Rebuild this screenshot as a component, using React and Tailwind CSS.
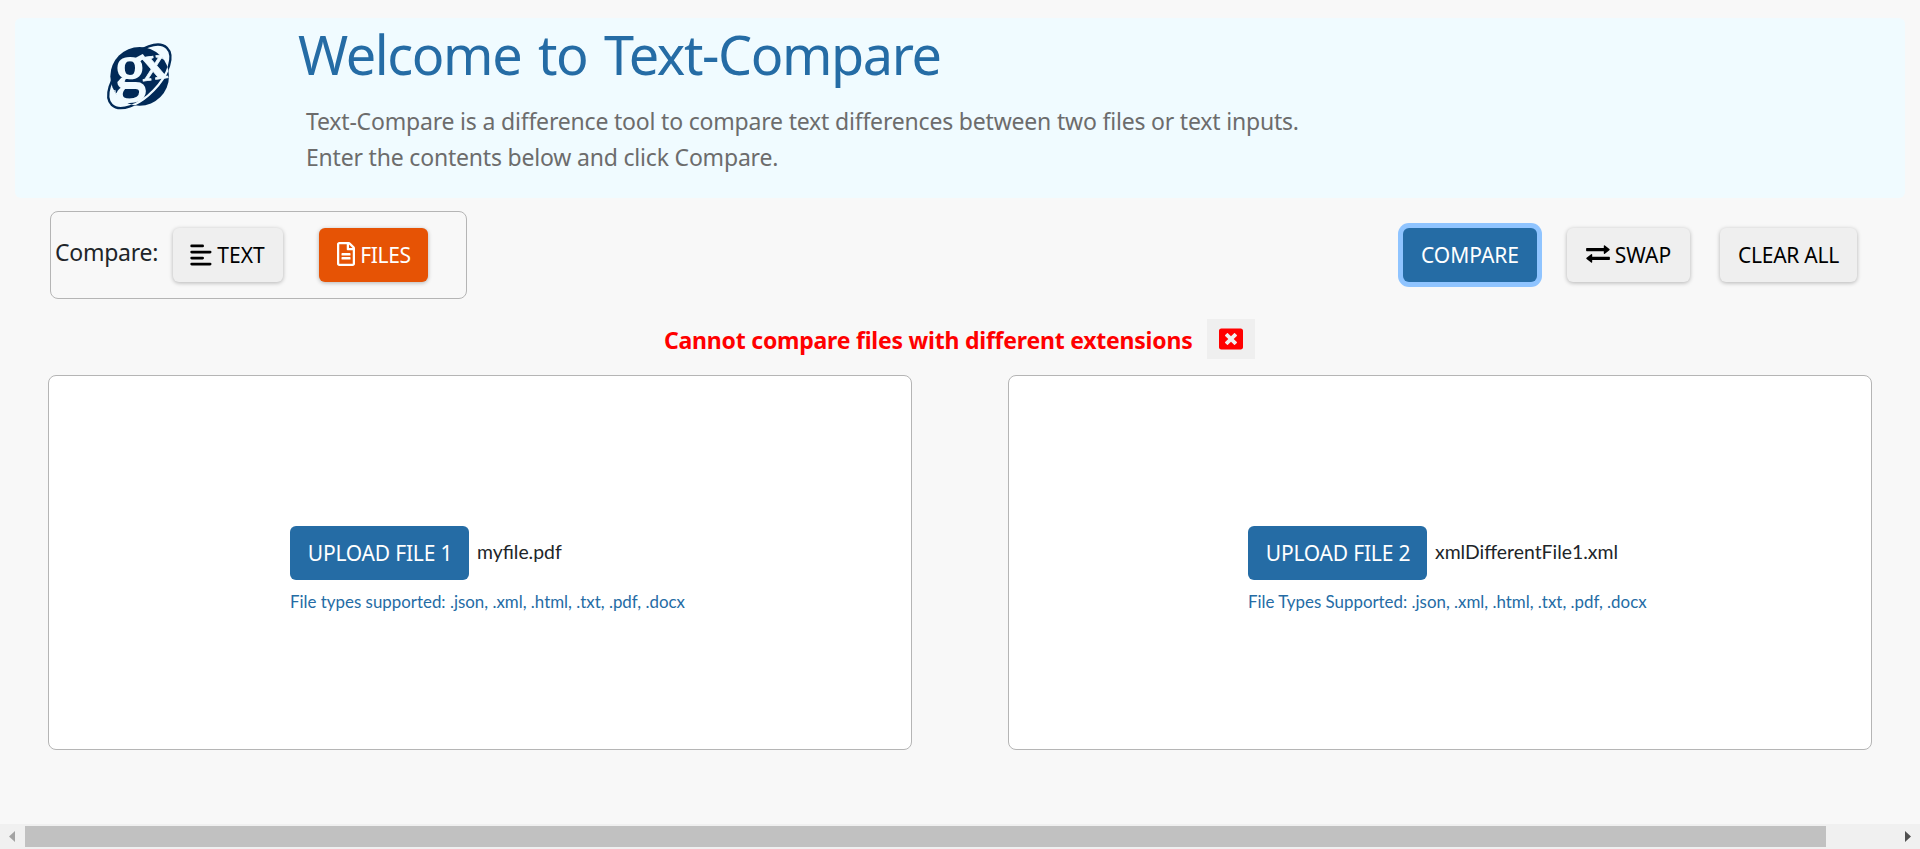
import { FaRegFileAlt, FaWindowClose } from "react-icons/fa";

function Logo() {
  return (
    <svg viewBox="0 0 200 204" className="h-[68px] w-[66.67px] overflow-visible" aria-label="gx">
      <defs>
        <clipPath id="globe">
          <circle cx="101" cy="100" r="88" />
        </clipPath>
      </defs>
      <ellipse cx="100" cy="100" rx="119" ry="60" transform="rotate(-46 100 100)" fill="none" stroke="#012a57" strokeWidth="7" />
      <circle cx="101" cy="100" r="88" fill="#012a57" />
      <g clipPath="url(#globe)">
        <path d="M-19 100 A119 60 0 0 0 219 100" transform="rotate(-46 100 100)" fill="none" stroke="#f0fbff" strokeWidth="7" />
        <path d="M10 148 L28 140 L30 150 L42 148 L36 168 L42 188 L12 190 Z" fill="#f0fbff" />
        <path d="M140 6 L166 28 L162 44 L174 50 L204 40 L190 0 Z" fill="#f0fbff" />
      </g>
      <g fill="#f0fbff" stroke="#f0fbff" fontFamily="'Liberation Serif', serif">
        <text x="26" y="134" fontSize="188" fontWeight="400" strokeWidth="6">g</text>
        <text x="106" y="110" fontSize="154" fontWeight="700" strokeWidth="2" transform="rotate(-8 140 76)">x</text>
      </g>
    </svg>
  );
}

function AlignIcon() {
  return (
    <svg viewBox="0 0 22 22" className="h-[22px] w-[22px] shrink-0" stroke="currentColor" strokeWidth="2.8" strokeLinecap="round">
      <path d="M1.7 1.9H12.6M1.7 8.1H20.1M1.7 14.1H12.6M1.7 20.1H20.1" />
    </svg>
  );
}

function SwapIcon() {
  return (
    <svg viewBox="0 0 24 18" className="h-[18px] w-6 shrink-0" fill="currentColor">
      <path d="M.8 3H17.8V.9Q17.8-.3 18.9.4L23.4 4Q24 4.6 23.4 5.2L18.9 8.8Q17.8 9.4 17.8 8.3V6.2H.8Q.1 6.2.1 5.5V3.7Q.1 3 .8 3Z" />
      <path d="M23.2 11.8H6.2V9.7Q6.2 8.5 5.1 9.2L.6 12.8Q0 13.4.6 14L5.1 17.6Q6.2 18.2 6.2 17.1V15H23.2Q23.9 15 23.9 14.3V12.5Q23.9 11.8 23.2 11.8Z" />
    </svg>
  );
}

const buttonBase =
  "flex h-[54px] items-center justify-center rounded-md pt-px font-['Noto_Sans',sans-serif] text-[21px] leading-none whitespace-nowrap";
const lightButton = "bg-[#efefef] text-black shadow-[0_1px_4px_rgba(0,0,0,0.28)]";

function UploadCard({ label, file, caption, offset }) {
  return (
    <section className={`h-[375px] w-[864px] rounded-lg border border-[#b5b5b5] bg-white pt-[150px] ${offset}`}>
      <div className="flex items-center">
        <button className={`${buttonBase} w-[179px] bg-[#256ca5] pl-px tracking-[-0.2px] text-white`}>{label}</button>
        <span className="-mt-0.5 ml-2 font-['Lato',sans-serif] text-[19.4px] text-[#212529]">{file}</span>
      </div>
      <p className="mt-2.5 font-['Lato',sans-serif] text-[16.9px] leading-6 text-[#256ca5]">{caption}</p>
    </section>
  );
}

export default function App() {
  return (
    <div className="flex h-[849px] w-[1920px] flex-col overflow-hidden bg-[#f8f8f8] font-['Noto_Sans',sans-serif]">
      <header className="mx-[15px] mt-[18px] flex h-[180px] shrink-0 rounded-md bg-[#f0fbff]">
        <div className="w-[283px] pt-[25px] pl-[91px]">
          <Logo />
        </div>
        <div>
          <h1 className="h-[76px] text-[54px] leading-[72px] tracking-[-1.4px] text-[#256ca5] [word-spacing:4px]">Welcome to Text-Compare</h1>
          <p className="mt-[9px] pl-2 text-[23px] leading-9 tracking-[-0.19px] text-[#6c6c6c]">
            Text-Compare is a difference tool to compare text differences between two files or text inputs.
            <br />
            Enter the contents below and click Compare.
          </p>
        </div>
      </header>

      <div className="mt-[13px] flex h-[88px] shrink-0 justify-between pr-[63px] pl-[50px]">
        <div className="flex w-[417px] items-start rounded-lg border border-[#b5b5b5] pt-4 pl-1">
          <span className="w-[118px] pt-0.5 text-[23px] leading-[44px] tracking-[-0.25px] text-[#212529]">Compare:</span>
          <button className={`${buttonBase} ${lightButton} w-[110px] gap-[5px] pr-px`}>
            <span className="-mt-0.5"><AlignIcon /></span>TEXT
          </button>
          <button className={`${buttonBase} ml-9 w-[109px] gap-1 bg-[#e65305] tracking-[-0.3px] text-white shadow-[0_1px_4px_rgba(0,0,0,0.28)]`}>
            <FaRegFileAlt className="-mt-1 size-6 w-[20px] shrink-0" />FILES
          </button>
        </div>
        <div className="flex items-start pt-[17px]">
          <button className={`${buttonBase} w-[134px] bg-[#256ca5] text-white shadow-[0_0_0_5px_#8fc4ff]`}>COMPARE</button>
          <button className={`${buttonBase} ${lightButton} ml-[30px] w-[123px] gap-[5px]`}>
            <span className="-mt-1"><SwapIcon /></span>SWAP
          </button>
          <button className={`${buttonBase} ${lightButton} ml-[30px] w-[137px] tracking-[-0.25px]`}>CLEAR ALL</button>
        </div>
      </div>

      <div className="mt-5 flex h-10 shrink-0 items-center pl-[664px]">
        <strong className="w-[543px] pt-0.5 text-[23px] leading-9 font-bold tracking-[-0.22px] whitespace-nowrap text-[#ff0000]">
          Cannot compare files with different extensions
        </strong>
        <button className="flex h-10 w-12 items-center justify-center bg-[#efefef] pb-px text-[#ff0000]" aria-label="Close">
          <FaWindowClose className="size-6" />
        </button>
      </div>

      <main className="mt-4 flex shrink-0 gap-24 pl-[48px]">
        <UploadCard label="UPLOAD FILE 1" file="myfile.pdf" caption="File types supported: .json, .xml, .html, .txt, .pdf, .docx" offset="pl-[241px]" />
        <UploadCard label="UPLOAD FILE 2" file="xmlDifferentFile1.xml" caption="File Types Supported: .json, .xml, .html, .txt, .pdf, .docx" offset="pl-[239px]" />
      </main>

      <div className="mt-auto flex h-[25px] shrink-0 items-start bg-[#f0f0f0] pt-0.5">
        <div className="flex h-[21px] w-[25px] items-center pl-[9px]">
          <svg viewBox="0 0 6 11" className="h-[11px] w-1.5 fill-[#a3a3a3]"><path d="M6 0V11L0 5.5Z" /></svg>
        </div>
        <div className="h-[21px] w-[1801px] bg-[#c1c1c1]" />
        <div className="flex h-[21px] flex-1 items-center justify-end pr-[9px]">
          <svg viewBox="0 0 6 11" className="h-[11px] w-1.5 fill-[#505050]"><path d="M0 0V11L6 5.5Z" /></svg>
        </div>
      </div>
    </div>
  );
}
